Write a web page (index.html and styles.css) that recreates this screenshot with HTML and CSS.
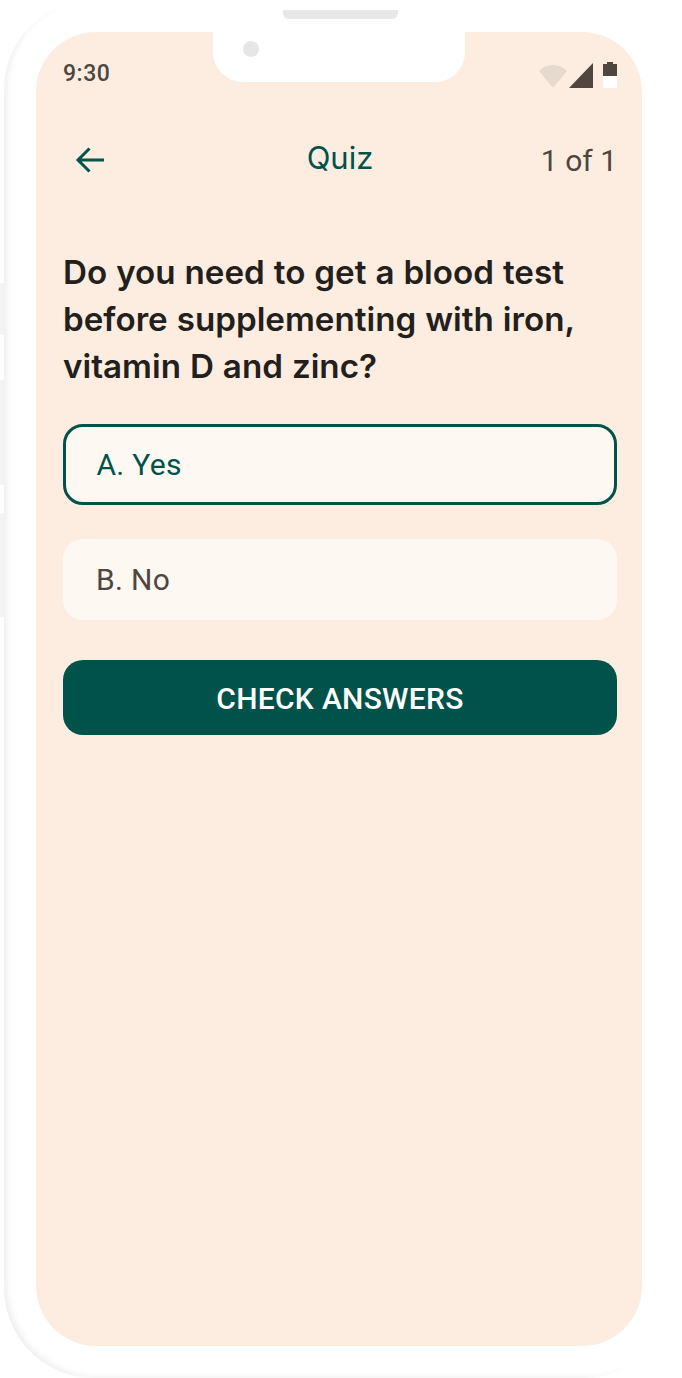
FILE: index.html
```html
<!DOCTYPE html>
<html lang="en">
<head>
    <meta charset="UTF-8">
    <meta name="viewport" content="width=device-width, initial-scale=1.0">
    <title>Quiz</title>
    <link rel="stylesheet" href="styles.css">
</head>
<body>
    <div class="phone">
        <!-- Hardware buttons on the left edge -->
        <span class="side-btn side-btn-1"></span>
        <span class="side-btn side-btn-2"></span>
        <span class="side-btn side-btn-3"></span>

        <span class="speaker"></span>

        <div class="screen">
            <div class="notch"><span class="camera"></span></div>

            <div class="status-bar">
                <span class="time">9:30</span>
                <div class="status-icons">
                    <svg class="wifi" width="30" height="24" viewBox="0 0 30 24"><path d="M1 7C8 -1 22 -1 29 7L15 24Z" fill="#e6d9ce"/></svg>
                    <svg class="signal" width="24" height="25" viewBox="0 0 24 25"><path d="M24 0V25H0Z" fill="#4f4640"/></svg>
                    <svg class="battery" width="14" height="26" viewBox="0 0 14 26"><path d="M4 0H10V2H14V14H0V2H4Z" fill="#4f4640"/><rect y="14" width="14" height="12" fill="#fff"/></svg>
                </div>
            </div>

            <div class="top-bar">
                <button class="back-btn" aria-label="Back">
                    <svg width="30" height="28" viewBox="0 0 30 28" fill="none" stroke="#00524a" stroke-width="3"><path d="M29 14H3M14.500 2.500L3 14L14.500 25.500"/></svg>
                </button>
                <h1 class="title">Quiz</h1>
                <span class="progress">1 of 1</span>
            </div>

            <h2 class="question">Do you need to get a blood test before supplementing with iron, vitamin D and zinc?</h2>

            <div class="options">
                <div class="option option-selected">A. Yes</div>
                <div class="option">B. No</div>
            </div>

            <button class="check-btn">CHECK ANSWERS</button>
        </div>
    </div>
</body>
</html>
```

FILE: styles.css
```css
* {
    box-sizing: border-box;
    font-family: "Roboto", sans-serif;
}
body {
    margin: 0;
    background: white;
}
.phone {
    position: relative;
    width: 670px;
    height: 1378px;
    margin-left: 4px;
    padding: 32px 32px;
    border-radius: 90px;
    background: white;
    box-shadow: inset 6px -3px 7px -3px rgba(0,0,0,0.07);
}
.side-btn {
    position: absolute;
    left: -4px;
    width: 4px;
    background: #f3f3f3;
    border-radius: 2px 0 0 2px;
}
.side-btn-1 {
    top: 283px;
    height: 52px;
}
.side-btn-2 {
    top: 380px;
    height: 105px;
}
.side-btn-3 {
    top: 513px;
    height: 104px;
}
.speaker {
    position: absolute;
    top: 10px;
    left: 279px;
    width: 115px;
    height: 9px;
    background: #e8e8e8;
    border-radius: 0 0 6px 6px;
}
.screen {
    position: relative;
    height: 1314px;
    padding: 0 25px 0 27px;
    background: #fdede0;
    border-radius: 60px;
}
.notch {
    position: absolute;
    top: 0;
    left: 177px;
    width: 252px;
    height: 50px;
    background: white;
    border-radius: 0 0 30px 30px;
}
.camera {
    position: absolute;
    top: 9px;
    left: 30px;
    width: 16px;
    height: 16px;
    background: #e6e6e6;
    border-radius: 50%;
}
.status-bar {
    display: flex;
    justify-content: space-between;
    align-items: center;
    height: 82px;
}
.time {
    font-size: 23px;
    font-weight: 500;
    color: #4f4640;
    letter-spacing: 0.5px;
}
.status-icons {
    display: flex;
    align-items: flex-end;
    margin-top: 4px;
}
.signal {
    margin: 0 10px 0 1px;
}
.top-bar {
    display: flex;
    justify-content: space-between;
    align-items: center;
    height: 40px;
    margin-top: 26px;
    position: relative;
}
.back-btn {
    display: flex;
    margin-left: 12px;
    padding: 0;
    background: none;
    border: none;
}
.title {
    position: absolute;
    top: -1px;
    left: 0;
    right: 0;
    margin: 0;
    font-family: "Inter", sans-serif;
    font-optical-sizing: none;
    font-size: 31px;
    font-weight: 400;
    color: #00524a;
    text-align: center;
    pointer-events: none;
}
.progress {
    font-size: 30px;
    color: #4f4640;
}
.question {
    margin: 69px 0 0;
    font-family: "Inter", sans-serif;
    font-optical-sizing: none;
    font-size: 33.200px;
    font-weight: 600;
    word-spacing: 0.600px;
    line-height: 47px;
    color: #231f1c;
}
.options {
    display: flex;
    flex-direction: column;
    gap: 34px;
    margin-top: 34px;
}
.option {
    display: flex;
    align-items: center;
    height: 81px;
    padding: 0 33px;
    font-size: 30px;
    letter-spacing: 0.3px;
    color: #4f4640;
    background: #fef8f2;
    border-radius: 20px;
}
.option-selected {
    padding: 0 30.500px;
    color: #00524a;
    border: 3px solid #00524a;
}
.check-btn {
    display: block;
    width: 100%;
    height: 75px;
    margin-top: 40px;
    padding-top: 3px;
    font-size: 30px;
    font-weight: 500;
    letter-spacing: 0.3px;
    color: white;
    background: #00524a;
    border: none;
    border-radius: 20px;
}
```
